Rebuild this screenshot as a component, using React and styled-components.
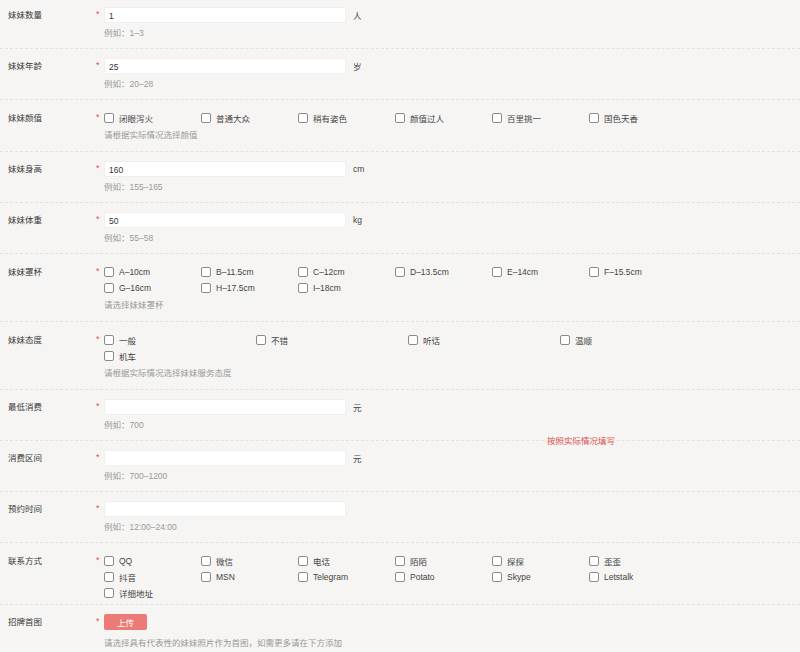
import styled, { createGlobalStyle } from "styled-components";

const GlobalStyle = createGlobalStyle`
  html, body {
    margin: 0;
    padding: 0;
    background: #f6f5f3;
  }
  body {
    font-family: "Liberation Sans", "Noto Sans CJK SC", sans-serif;
    font-size: 8.5px;
    color: #444;
  }
`;

const Form = styled.div`
  position: relative;
  width: 800px;
  margin-top: -2px;
`;

const Row = styled.div`
  position: relative;
  display: grid;
  grid-template-columns: 88px 8px 1fr;
  padding: ${(p) => (p.$check ? 10 : 9)}px 0
    ${(p) => (p.$noHint ? 3 : p.$check ? 9 : 8)}px 8px;
  border-bottom: 1px dashed #e4e2df;
  &:last-child {
    border-bottom: 0;
  }
`;

const Label = styled.div`
  line-height: 16px;
  color: #383838;
`;

const Star = styled.span`
  color: #d8514c;
  line-height: 14px;
  font-size: 9px;
`;

const Field = styled.div`
  display: flex;
  flex-direction: column;
`;

const InputLine = styled.div`
  display: flex;
  align-items: center;
  height: 16px;
`;

const TextInput = styled.div`
  box-sizing: border-box;
  width: 242px;
  height: 16px;
  line-height: 16px;
  padding-left: 4px;
  background: #fff;
  border: 1px solid #f0efed;
  color: #333;
`;

const Unit = styled.span`
  margin-left: 7px;
  color: #444;
`;

const Hint = styled.div`
  margin-top: ${(p) => p.$gap || 3}px;
  line-height: 14px;
  color: #999;
`;

const CheckGrid = styled.div`
  display: grid;
  grid-template-columns: repeat(${(p) => p.$cols}, ${(p) => p.$colWidth}px);
  grid-auto-rows: 16px;
`;

const CheckItem = styled.label`
  display: flex;
  align-items: center;
  color: #444;
`;

const Box = styled.span`
  box-sizing: border-box;
  width: 10px;
  height: 10px;
  border: 1px solid #8a8a8a;
  border-radius: 2px;
  background: #fff;
  margin-right: 5px;
  flex-shrink: 0;
`;

const UploadButton = styled.button`
  box-sizing: border-box;
  width: 43px;
  height: 16px;
  padding: 0;
  border: 0;
  border-radius: 2px;
  background: #ec7b78;
  color: #fff;
  font-family: inherit;
  font-size: 8.5px;
`;

const Note = styled.div`
  position: absolute;
  left: 547px;
  bottom: -8px;
  color: #d9534f;
  line-height: 14px;
`;

const textRows = [
  { label: "妹妹数量", value: "1", unit: "人", hint: "例如：1–3" },
  { label: "妹妹年龄", value: "25", unit: "岁", hint: "例如：20–28" },
];

const middleTextRows = [
  { label: "妹妹身高", value: "160", unit: "cm", hint: "例如：155–165" },
  { label: "妹妹体重", value: "50", unit: "kg", hint: "例如：55–58" },
];

const looks = ["闭眼泻火", "普通大众", "稍有姿色", "颜值过人", "百里挑一", "国色天香"];
const cups = [
  "A–10cm", "B–11.5cm", "C–12cm", "D–13.5cm", "E–14cm", "F–15.5cm",
  "G–16cm", "H–17.5cm", "I–18cm",
];
const attitudes = ["一般", "不错", "听话", "温顺", "机车"];
const contacts = [
  "QQ", "微信", "电话", "陌陌", "探探", "歪歪",
  "抖音", "MSN", "Telegram", "Potato", "Skype", "Letstalk",
  "详细地址",
];

function TextRow({ label, value, unit, hint, children }) {
  return (
    <Row>
      <Label>{label}</Label>
      <Star>*</Star>
      <Field>
        <InputLine>
          <TextInput>{value}</TextInput>
          {unit && <Unit>{unit}</Unit>}
        </InputLine>
        <Hint>{hint}</Hint>
      </Field>
      {children}
    </Row>
  );
}

function CheckRow({ label, items, cols, colWidth, hint }) {
  return (
    <Row $check $noHint={!hint}>
      <Label>{label}</Label>
      <Star>*</Star>
      <Field>
        <CheckGrid $cols={cols} $colWidth={colWidth}>
          {items.map((it) => (
            <CheckItem key={it}>
              <Box />
              {it}
            </CheckItem>
          ))}
        </CheckGrid>
        {hint && <Hint $gap={2}>{hint}</Hint>}
      </Field>
    </Row>
  );
}

export default function App() {
  return (
    <>
      <GlobalStyle />
      <Form>
        {textRows.map((r) => (
          <TextRow key={r.label} {...r} />
        ))}
        <CheckRow label="妹妹颜值" items={looks} cols={6} colWidth={97} hint="请根据实际情况选择颜值" />
        {middleTextRows.map((r) => (
          <TextRow key={r.label} {...r} />
        ))}
        <CheckRow label="妹妹罩杯" items={cups} cols={6} colWidth={97} hint="请选择妹妹罩杯" />
        <CheckRow label="妹妹态度" items={attitudes} cols={4} colWidth={152} hint="请根据实际情况选择妹妹服务态度" />
        <TextRow label="最低消费" value="" unit="元" hint="例如：700">
          <Note>按照实际情况填写</Note>
        </TextRow>
        <TextRow label="消费区间" value="" unit="元" hint="例如：700–1200" />
        <TextRow label="预约时间" value="" hint="例如：12:00–24:00" />
        <CheckRow label="联系方式" items={contacts} cols={6} colWidth={97} />
        <Row>
          <Label>招牌首图</Label>
          <Star>*</Star>
          <Field>
            <UploadButton>上传</UploadButton>
            <Hint $gap={6}>请选择具有代表性的妹妹照片作为首图，如需更多请在下方添加</Hint>
          </Field>
        </Row>
      </Form>
    </>
  );
}
